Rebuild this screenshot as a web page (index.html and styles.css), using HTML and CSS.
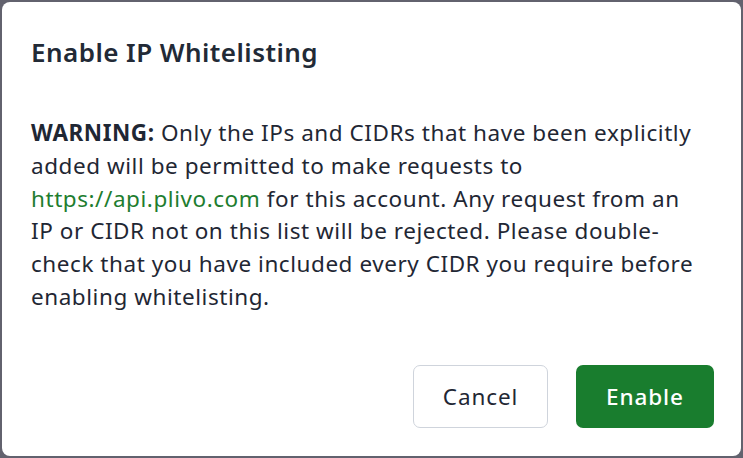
FILE: index.html
```html
<!DOCTYPE html>
<html lang="en">
<head>
<meta charset="utf-8">
<title>Enable IP Whitelisting</title>
<link rel="stylesheet" href="styles.css">
</head>
<body>
<div class="modal">
  <h2 class="modal-title">Enable IP Whitelisting</h2>
  <p class="modal-text"><strong>WARNING:</strong> Only the IPs and CIDRs that have been explicitly<br>added will be permitted to make requests to<br><a class="link" href="#">https://api.plivo.com</a> for this account. Any request from an<br>IP or CIDR not on this list will be rejected. Please double-<br>check that you have included every CIDR you require before<br>enabling whitelisting.</p>
  <div class="modal-footer">
    <button class="btn btn-secondary" type="button">Cancel</button>
    <button class="btn btn-primary" type="button">Enable</button>
  </div>
</div>
</body>
</html>
```
FILE: styles.css
```css
html, body {
  margin: 0;
  padding: 0;
}
body {
  background: #62626e;
  font-family: "Noto Sans", sans-serif;
  color: #1f2734;
  width: 743px;
  height: 458px;
  overflow: hidden;
}
.modal {
  margin: 2px;
  height: 454px;
  box-sizing: border-box;
  background: #ffffff;
  border-radius: 8px;
  display: flex;
  flex-direction: column;
  padding: 34px 27px 28px 29px;
}
.modal-title {
  margin: 0;
  font-size: 26px;
  line-height: 32px;
  font-weight: 600;
  letter-spacing: 0.45px;
  color: #222a36;
}
.modal-text {
  margin: 49px 0 0 0;
  font-size: 22.5px;
  line-height: 32.8px;
  letter-spacing: 0.55px;
  white-space: nowrap;
}
.modal-text strong {
  font-weight: 700;
}
.link {
  color: #1e7d2f;
  text-decoration: none;
}
.modal-footer {
  margin-top: auto;
  display: flex;
  justify-content: flex-end;
  gap: 28px;
}
.btn {
  height: 63px;
  border-radius: 7px;
  font-family: "Noto Sans", sans-serif;
  font-size: 22.5px;
  letter-spacing: 0.9px;
  box-sizing: border-box;
  cursor: pointer;
}
.btn-secondary {
  width: 135px;
  background: #ffffff;
  border: 1px solid #cfd4dc;
  color: #1f2734;
}
.btn-primary {
  width: 138px;
  background: #197d2e;
  border: none;
  color: #ffffff;
  font-weight: 500;
}
```
